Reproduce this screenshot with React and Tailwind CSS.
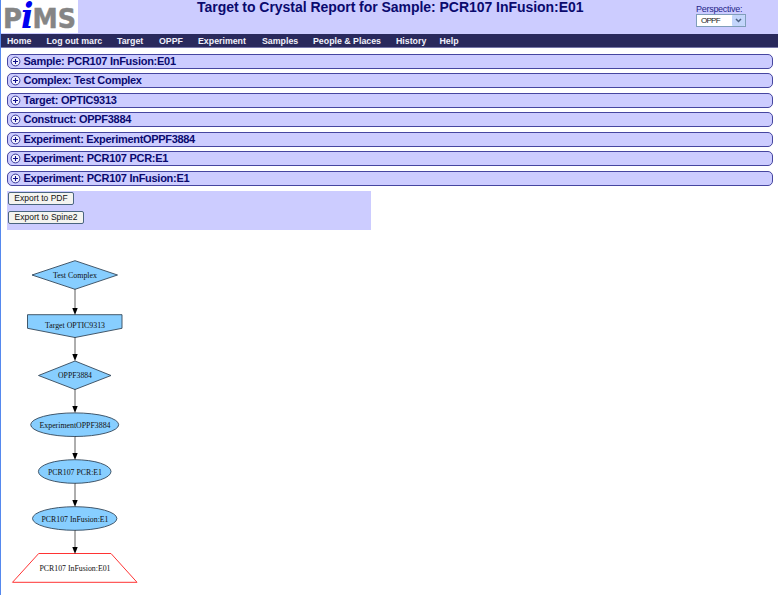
const NAV = [
  ['Home', 'w-[39.5px]'],
  ['Log out marc', 'w-[70.5px]'],
  ['Target', 'w-[42px]'],
  ['OPPF', 'w-[39px]'],
  ['Experiment', 'w-[64px]'],
  ['Samples', 'w-[51px]'],
  ['People & Places', 'w-[83px]'],
  ['History', 'w-[43.5px]'],
  ['Help', 'w-[30px]'],
];

const SECTIONS = [
  ['Sample: PCR107 InFusion:E01', 'tracking-[-0.27px]'],
  ['Complex: Test Complex', 'tracking-[-0.3px]'],
  ['Target: OPTIC9313', 'tracking-[-0.26px]'],
  ['Construct: OPPF3884', 'tracking-[-0.29px]'],
  ['Experiment: ExperimentOPPF3884', 'tracking-[-0.32px]'],
  ['Experiment: PCR107 PCR:E1', 'tracking-[-0.28px]'],
  ['Experiment: PCR107 InFusion:E1', 'tracking-[-0.28px]'],
];

const ARROWS = [
  [289, 315],
  [337, 361],
  [389, 413],
  [436, 460],
  [483, 507],
  [530, 554],
];

const LABELS = [
  ['Test Complex', 75, 278, 44],
  ['Target OPTIC9313', 75, 328, 60],
  ['OPPF3884', 75, 378, 34],
  ['ExperimentOPPF3884', 75, 428, 71],
  ['PCR107 PCR:E1', 75, 474.5, 54],
  ['PCR107 InFusion:E1', 75, 521.5, 67],
  ['PCR107 InFusion:E01', 75, 571, 71],
];

function Logo() {
  return (
    <svg width="77" height="33" viewBox="0 0 77 33" className="block shrink-0 bg-white">
      <g fontFamily="'DejaVu Sans', sans-serif" fontWeight="bold" fontSize="27" fill="#858585" stroke="#858585" strokeWidth="0.5">
        <text x="2" y="28" textLength="19" lengthAdjust="spacingAndGlyphs">P</text>
        <text x="31.5" y="28" textLength="43.5" lengthAdjust="spacingAndGlyphs">MS</text>
      </g>
      <text x="20" y="28" fontFamily="'DejaVu Serif', serif" fontWeight="bold" fontStyle="italic" fontSize="36" fill="#0000f0" textLength="12.5" lengthAdjust="spacingAndGlyphs">i</text>
    </svg>
  );
}

function PlusIcon() {
  return (
    <svg width="9" height="9" viewBox="0 0 9 9" className="block shrink-0 overflow-visible">
      <circle cx="4.5" cy="4.5" r="4.4" fill="#f4f4ff" stroke="#26268a" strokeWidth="0.9" />
      <path d="M4.5 2v5M2 4.5h5" stroke="#10108a" strokeWidth="1.1" />
    </svg>
  );
}

function Section({ label, tracking }) {
  return (
    <div className="h-[20px] odd:h-[19px]">
      <div className="flex h-[15px] items-center rounded-[5px] border border-[#4646a0] bg-[#ccccff] pl-[3px]">
        <PlusIcon />
        <span className={`ml-[3.5px] whitespace-nowrap text-[11px] leading-[13px] font-bold text-[#0a0a6e] ${tracking}`}>{label}</span>
      </div>
    </div>
  );
}

function ExportButton({ label, width }) {
  return (
    <button className={`block h-[13px] ${width} whitespace-nowrap rounded-[2px] border border-[#4a6580] bg-[#f4f4f0] text-center text-[8.5px] leading-[11px] text-[#111]`}>
      {label}
    </button>
  );
}

function Diagram() {
  return (
    <svg width="150" height="345" viewBox="0 250 150 345" className="block">
      <g fill="#87ceff" stroke="#33475a" strokeWidth="0.9">
        <path d="M32 275L75 260.7L117.5 275L75 289.3Z" />
        <path d="M27.5 314.7H122V328.3L75 337.5L27.5 328.3Z" />
        <path d="M38.5 375.5L75 361L111 375.5L75 389.5Z" />
        <ellipse cx="74.7" cy="424.7" rx="44" ry="11.8" />
        <ellipse cx="74.7" cy="471.5" rx="36.3" ry="11.8" />
        <ellipse cx="74.7" cy="518.5" rx="42.2" ry="11.8" />
      </g>
      <path d="M38.7 553.5H111L137 582.3H12.5Z" fill="#fff" stroke="#f33" strokeWidth="1" />
      {ARROWS.map(([from, to]) => (
        <g key={from}>
          <path d={`M75 ${from}V${to - 6}`} stroke="#333" strokeWidth="0.8" />
          <path d={`M72.3 ${to - 7}H77.7L75 ${to}Z`} fill="#000" />
        </g>
      ))}
      <g fontFamily="'Liberation Serif', serif" fontSize="7.9" fill="#111" textAnchor="middle">
        {LABELS.map(([label, x, y, width]) => (
          <text key={label} x={x} y={y} textLength={width} lengthAdjust="spacingAndGlyphs">{label}</text>
        ))}
      </g>
    </svg>
  );
}

export default function App() {
  return (
    <div className="h-[595px] w-[778px] overflow-hidden border-l border-[#5588ee] bg-white font-['Liberation_Sans',Arial,sans-serif]">
      <header className="flex h-[34px] items-start bg-[#ccccff]">
        <Logo />
        <h1 className="ml-[119px] w-[499px] whitespace-nowrap text-[14px] leading-[14px] font-bold tracking-[-0.04px] text-[#0a0a6e]">
          Target to Crystal Report for Sample: PCR107 InFusion:E01
        </h1>
        <div className="w-[50px] pt-[5px]">
          <div className="text-[9px] leading-[9px] tracking-[-0.28px] text-[#26268a]">Perspective:</div>
          <div className="flex h-[13px] items-center justify-between border border-[#7f9db9] bg-white pl-1 text-[8px] leading-[11px] tracking-[-0.75px] text-[#222]">
            <span>OPPF</span>
            <span className="flex h-[11px] w-[13px] items-center justify-center rounded-[1px] bg-[#c3d5fb]">
              <svg width="7" height="5" viewBox="0 0 7 5"><path d="M1 1L3.5 3.5L6 1" fill="none" stroke="#4d6185" strokeWidth="1.5" /></svg>
            </span>
          </div>
        </div>
      </header>
      <nav className="flex h-[14px] items-center border-b border-[#7777a8] bg-[#29295c] pt-px pl-[6px] text-[8.8px] leading-[12px] font-bold text-[#f0f0fa]">
        {NAV.map(([label, width]) => (
          <span key={label} className={`shrink-0 whitespace-nowrap ${width}`}>{label}</span>
        ))}
      </nav>
      <main className="pt-[6px] pr-[5px] pl-[6px]">
        <div>
          {SECTIONS.map(([label, tracking]) => (
            <Section key={label} label={label} tracking={tracking} />
          ))}
        </div>
        <div className="mt-px flex h-[39px] w-[364px] flex-col gap-[6px] bg-[#ccccff] pt-px pl-px">
          <ExportButton label="Export to PDF" width="w-[66px]" />
          <ExportButton label="Export to Spine2" width="w-[76px]" />
        </div>
      </main>
      <div className="-ml-px pt-5">
        <Diagram />
      </div>
    </div>
  );
}
